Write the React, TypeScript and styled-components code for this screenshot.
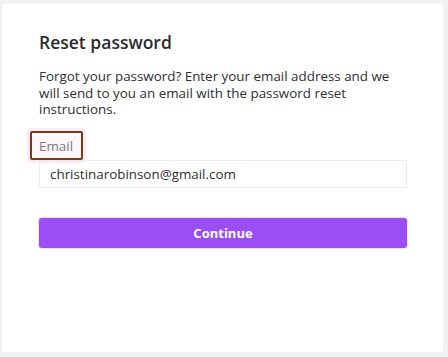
import React from "react";
import styled, { createGlobalStyle } from "styled-components";

const GlobalStyle = createGlobalStyle`
    html, body {
        margin: 0;
        padding: 0;
        background: #f1f1f1;
        font-family: "Open Sans", "Liberation Sans", sans-serif;
    }
`;

const Page = styled.div`
    width: 448px;
    height: 357px;
    box-sizing: border-box;
    padding: 4px 5px 5px 2px;
    display: flex;
`;

const Card = styled.div`
    flex: 1;
    background: #ffffff;
    border-radius: 2px;
    padding: 26px 36px 0 37px;
    display: flex;
    flex-direction: column;
`;

const Title = styled.h1`
    margin: 0;
    font-size: 17.5px;
    font-weight: 600;
    color: #2c2c2e;
    line-height: 24px;
`;

const Intro = styled.p`
    margin: 14px 0 0;
    font-size: 13.4px;
    line-height: 16.5px;
    color: #2f2f31;
`;

const Field = styled.div`
    margin-top: 13px;
    display: flex;
    flex-direction: column;
    align-items: flex-start;
`;

const Label = styled.label`
    margin-left: -9px;
    padding: 4px 8px 3px 7px;
    border: 2px solid #7b3a17;
    border-radius: 2px;
    font-size: 13.4px;
    line-height: 18px;
    color: #7c7c80;
    box-shadow: 0 0 0 3px #fde8f6;
    background: #fdf6fb;
`;

const Input = styled.div`
    align-self: stretch;
    height: 28px;
    box-sizing: border-box;
    border: 1px solid #ececec;
    padding: 0 10px;
    display: flex;
    align-items: center;
    font-size: 13.4px;
    color: #2f2f31;
`;

const Button = styled.button`
    margin-top: 30px;
    height: 30px;
    border: none;
    border-radius: 3px;
    background: #9b4ef3;
    color: #ffffff;
    font-family: inherit;
    font-size: 13px;
    font-weight: 700;
    box-shadow: 0 0 0 1px #f6dcfb;
    cursor: pointer;
`;

export default function App() {
    return (
        <>
            <GlobalStyle />
            <Page>
                <Card>
                    <Title>Reset password</Title>
                    <Intro>
                        Forgot your password? Enter your email address and we will send to you an email with the
                        password reset instructions.
                    </Intro>
                    <Field>
                        <Label>Email</Label>
                        <Input>christinarobinson@gmail.com</Input>
                    </Field>
                    <Button>Continue</Button>
                </Card>
            </Page>
        </>
    );
}
